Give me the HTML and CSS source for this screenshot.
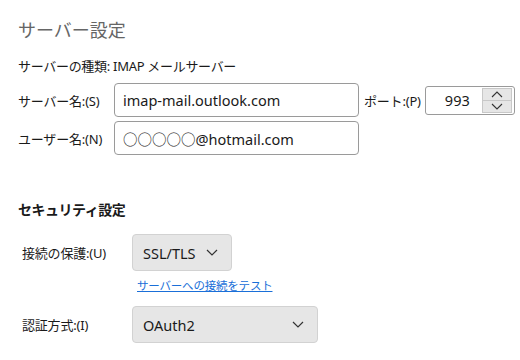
FILE: index.html
```html
<!DOCTYPE html>
<html lang="ja">
<head>
    <meta charset="UTF-8">
    <title>サーバー設定</title>
    <link rel="stylesheet" href="styles.css">
</head>
<body>

    <div class="panel">
        <h1 class="title">サーバー設定</h1>
        <div class="server-type">サーバーの種類: IMAP メールサーバー</div>

        <div class="field-row">
            <label class="label">サーバー名:(S)</label>
            <div class="text-input host">imap-mail.outlook.com</div>
            <label class="label port-label">ポート:(P)</label>
            <div class="port-box">
                <span class="port-value">993</span>
                <div class="spin">
                    <div class="spin-btn">
                        <svg width="12" height="7" viewBox="0 0 12 7"><path d="M1 6 L6 1 L11 6" fill="none" stroke="#333" stroke-width="1.1"/></svg>
                    </div>
                    <div class="spin-btn">
                        <svg width="12" height="7" viewBox="0 0 12 7"><path d="M1 1 L6 6 L11 1" fill="none" stroke="#333" stroke-width="1.1"/></svg>
                    </div>
                </div>
            </div>
        </div>

        <div class="field-row">
            <label class="label">ユーザー名:(N)</label>
            <div class="text-input host">○○○○○@hotmail.com</div>
        </div>

        <h2 class="section">セキュリティ設定</h2>

        <div class="select-row">
            <label class="label sec-label">接続の保護:(U)</label>
            <div class="select small">
                <span>SSL/TLS</span>
                <svg width="12" height="7" viewBox="0 0 12 7"><path d="M1 1 L6 6 L11 1" fill="none" stroke="#333" stroke-width="1.2"/></svg>
            </div>
        </div>
        <a class="test-link" href="#">サーバーへの接続をテスト</a>

        <div class="select-row">
            <label class="label sec-label">認証方式:(I)</label>
            <div class="select wide">
                <span>OAuth2</span>
                <svg width="12" height="7" viewBox="0 0 12 7"><path d="M1 1 L6 6 L11 1" fill="none" stroke="#333" stroke-width="1.2"/></svg>
            </div>
        </div>
    </div>

</body>
</html>
```

FILE: styles.css
```css
body {
    margin: 0;
    padding: 0;
    background-color: white;
    font-family: "Noto Sans", "Noto Sans CJK JP", sans-serif;
    color: #1a1a1a;
}

.panel {
    padding: 17px 18px 0 18px;
}

.title {
    margin: 0;
    font-size: 18px;
    font-weight: normal;
    line-height: 26px;
    color: #666;
}

.server-type {
    margin-top: 13px;
    font-size: 13px;
    letter-spacing: -0.3px;
    line-height: 20px;
}

.field-row {
    display: flex;
    align-items: center;
    margin-top: 4px;
}

.server-type + .field-row {
    margin-top: 7px;
}

.label {
    font-size: 13px;
    letter-spacing: -0.2px;
    width: 96px;
    flex-shrink: 0;
}

.text-input {
    box-sizing: border-box;
    flex-shrink: 0;
    height: 34px;
    border: 1px solid #9a9a9a;
    border-radius: 4px;
    padding: 0 8px;
    display: flex;
    align-items: center;
    font-size: 14.5px;
}

.host {
    width: 245px;
}

.port-label {
    width: auto;
    margin-left: 5px;
    margin-right: 4px;
}

.port-box {
    box-sizing: border-box;
    flex-shrink: 0;
    width: 90px;
    height: 29px;
    border: 1px solid #9a9a9a;
    border-radius: 3px;
    display: flex;
    align-items: stretch;
}

.port-value {
    flex: 1;
    display: flex;
    align-items: center;
    justify-content: flex-end;
    padding-right: 12px;
    font-size: 14.5px;
}

.spin {
    width: 30px;
    display: flex;
    flex-direction: column;
    margin: 1px 2px 1px 0;
}

.spin-btn {
    flex: 1;
    display: flex;
    align-items: center;
    justify-content: center;
    background-color: #e6e6e6;
    border: 1px solid #c8c8c8;
}

.spin-btn + .spin-btn {
    border-top: none;
}

.section {
    margin: 44px 0 0 0;
    font-size: 14px;
    letter-spacing: -0.5px;
    font-weight: bold;
    line-height: 22px;
}

.select-row {
    display: flex;
    align-items: center;
    margin-top: 13px;
}

.sec-label {
    box-sizing: border-box;
    width: 114px;
    padding-left: 4px;
}

.select {
    box-sizing: border-box;
    height: 37px;
    background-color: #e6e6e6;
    border: 1px solid #d2d2d2;
    border-radius: 4px;
    padding: 0 13px 0 10px;
    display: flex;
    align-items: center;
    justify-content: space-between;
    font-size: 14.5px;
}

.small {
    width: 100px;
}

.wide {
    width: 186px;
}

.test-link {
    display: block;
    margin: 6px 0 0 119px;
    font-size: 11.5px;
    letter-spacing: -0.2px;
    line-height: 18px;
    color: #1a6fd8;
}

.test-link + .select-row {
    margin-top: 11px;
}
```
